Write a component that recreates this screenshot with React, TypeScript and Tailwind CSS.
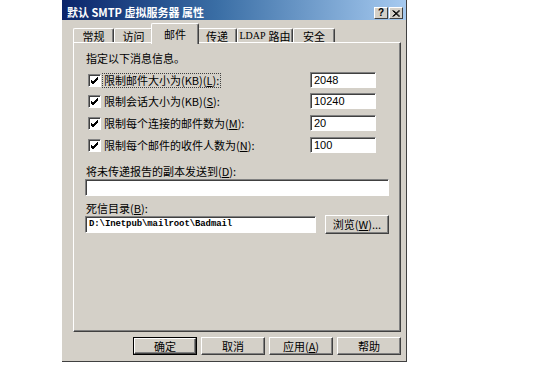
import React from "react";

const cjk = "font-['Noto_Sans_CJK_SC',sans-serif]";

function Check() {
  return (
    <div className="w-[13px] h-[13px] bg-white border-t border-l border-t-[#808080] border-l-[#808080] border-b border-r border-b-white border-r-white shadow-[inset_1px_1px_0_#404040] flex items-center justify-center shrink-0">
      <svg width="9" height="9" viewBox="0 0 9 9">
        <path d="M1 4 L3 6 L8 1 M1 5 L3 7 L8 2 M1 6 L3 8 L8 3" stroke="#000" strokeWidth="1" fill="none" />
      </svg>
    </div>
  );
}

function Sunken({ className = "", children }: { className?: string; children?: React.ReactNode }) {
  return (
    <div
      className={
        "bg-white border-t border-l border-t-[#808080] border-l-[#808080] border-b border-r border-b-white border-r-white shadow-[inset_1px_1px_0_#404040] flex items-center px-[3px] " +
        className
      }
    >
      {children}
    </div>
  );
}

function Btn({ children, def = false, className = "" }: { children: React.ReactNode; def?: boolean; className?: string }) {
  const inner = (
    <div
      className={
        "h-full w-full bg-[#d4d0c8] border-t border-l border-t-white border-l-white border-b border-r border-b-[#404040] border-r-[#404040] shadow-[inset_-1px_-1px_0_#808080] flex items-center justify-center text-[11px] leading-none text-black whitespace-nowrap " +
        cjk
      }
    >
      {children}
    </div>
  );
  return (
    <div className={"h-[18px] w-[64px] " + (def ? "border border-black " : "") + className}>{inner}</div>
  );
}

function Tab({ label, active = false, w }: { label: React.ReactNode; active?: boolean; w: string }) {
  if (active) {
    return (
      <div
        className={
          "relative z-10 -mb-[2px] -mx-[2px] h-[21px] bg-[#d4d0c8] border-t border-l border-t-white border-l-white border-r border-r-[#404040] rounded-t-[2px] shadow-[inset_-1px_0_0_#808080] flex items-start justify-center pt-[3px] text-[11px] leading-[14px] text-black whitespace-nowrap " +
          cjk +
          " " +
          w
        }
      >
        {label}
      </div>
    );
  }
  return (
    <div
      className={
        "h-[14px] bg-[#d4d0c8] border-t border-l border-t-white border-l-white border-r border-r-[#404040] rounded-t-[2px] shadow-[inset_-1px_0_0_#808080] flex items-center justify-center pt-[1px] text-[11px] leading-none text-black whitespace-nowrap " +
        cjk +
        " " +
        w
      }
    >
      {label}
    </div>
  );
}

function Row({ label, value, focus = false, mt }: { label: React.ReactNode; value: string; focus?: boolean; mt: string }) {
  return (
    <div className={"flex items-center h-[16px] " + mt}>
      <div className="ml-[14px] flex items-center">
        <Check />
        <div
          className={
            "ml-[1px] px-[1px] text-[11px] leading-[13px] text-black whitespace-nowrap " +
            cjk +
            (focus ? " border border-dotted border-[#404040]" : " border border-transparent")
          }
        >
          {label}
        </div>
      </div>
      <Sunken className="ml-auto mr-[24px] w-[66px] h-[16px]">
        <span className="font-['Liberation_Sans',sans-serif] text-[11px] leading-none text-black">{value}</span>
      </Sunken>
    </div>
  );
}

export default function App() {
  return (
    <div className="w-[533px] h-[366px] bg-white overflow-hidden">
      <div className="ml-[62px] w-[345px] h-[362px] bg-[#d4d0c8] border-r border-b border-r-[#404040] border-b-[#404040] flex flex-col">
        {/* Title bar */}
        <div className="h-[20px] w-full bg-[linear-gradient(to_right,#0a246a,#3a6ea5_45%,#a6caf0)] flex items-center pl-[5px] pr-[3px]">
          <span className={"text-white font-bold text-[11px] leading-none pt-[4px] whitespace-nowrap " + cjk}>
            默认 SMTP 虚拟服务器 属性
          </span>
          <div className="ml-auto flex items-end gap-[1px] self-end mb-[1px]">
            <div className="w-[14px] h-[12px] bg-[#d4d0c8] border-t border-l border-t-white border-l-white border-b border-r border-b-[#404040] border-r-[#404040] flex items-center justify-center">
              <span className="font-['Liberation_Sans',sans-serif] font-bold text-[10px] leading-none text-black">?</span>
            </div>
            <div className="w-[14px] h-[12px] bg-[#d4d0c8] border-t border-l border-t-white border-l-white border-b border-r border-b-[#404040] border-r-[#404040] flex items-center justify-center">
              <svg width="8" height="7" viewBox="0 0 8 7">
                <path d="M0.5 0.5 L7 6.5 M1.5 0.5 L8 6.5 M7 0.5 L0.5 6.5 M8 0.5 L1.5 6.5" stroke="#000" strokeWidth="1" />
              </svg>
            </div>
          </div>
        </div>

        {/* Tabs */}
        <div className="mt-[5px] ml-[11px] h-[17px] flex items-end">
          <Tab label="常规" w="w-[41px]" />
          <Tab label="访问" w="w-[39px]" />
          <Tab label="邮件" w="w-[48px]" active />
          <Tab label="传递" w="w-[40px]" />
          <Tab label={<><span className="font-['Liberation_Serif',serif] text-[10px] mr-[3px]">LDAP</span>路由</>} w="w-[56px]" />
          <Tab label="安全" w="w-[42px]" />
        </div>

        {/* Panel */}
        <div className="ml-[11px] mr-[5px] h-[290px] border-t border-l border-t-white border-l-white border-b border-r border-b-[#404040] border-r-[#404040] shadow-[inset_-1px_-1px_0_#808080] flex flex-col">
          <div className={"mt-[8px] ml-[12px] h-[14px] text-[11px] leading-[14px] text-black " + cjk}>指定以下消息信息。</div>
          <Row mt="mt-[7px]" focus label={<>限制邮件大小为(KB)(<u>L</u>):</>} value="2048" />
          <Row mt="mt-[5px]" label={<>限制会话大小为(KB)(<u>S</u>):</>} value="10240" />
          <Row mt="mt-[6px]" label={<>限制每个连接的邮件数为(<u>M</u>):</>} value="20" />
          <Row mt="mt-[6px]" label={<>限制每个邮件的收件人数为(<u>N</u>):</>} value="100" />
          <div className={"mt-[11px] ml-[12px] h-[14px] text-[11px] leading-[14px] text-black " + cjk}>
            将未传递报告的副本发送到(<u>D</u>):
          </div>
          <Sunken className="mt-[1px] ml-[11px] w-[304px] h-[17px]" />
          <div className={"mt-[5px] ml-[12px] h-[14px] text-[11px] leading-[14px] text-black " + cjk}>
            死信目录(<u>B</u>):
          </div>
          <div className="flex items-center h-[19px] ml-[11px]">
            <Sunken className="w-[231px] h-[17px]">
              <span className="font-['Liberation_Mono',monospace] font-bold text-[9px] leading-none text-black tracking-[-0.1px]">
                D:\Inetpub\mailroot\Badmail
              </span>
            </Sunken>
            <Btn className="ml-[9px] !w-[64px] !h-[19px]">
              <span>浏览(<u>W</u>)...</span>
            </Btn>
          </div>
        </div>

        {/* Buttons */}
        <div className="mt-[5px] flex justify-end gap-[4px] pr-[5px]">
          <Btn def>确定</Btn>
          <Btn>取消</Btn>
          <Btn>
            <span>应用(<u>A</u>)</span>
          </Btn>
          <Btn>帮助</Btn>
        </div>
      </div>
    </div>
  );
}
